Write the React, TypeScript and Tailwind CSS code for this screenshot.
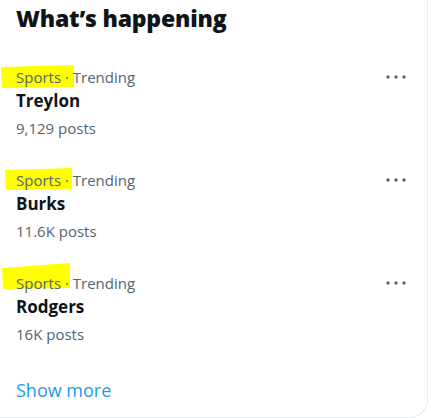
import React from "react";

const items = [
  { title: "Treylon", posts: "9,129 posts", hl: "M1,2 L74,0 L74,22 L2,23 Z" },
  { title: "Burks", posts: "11.6K posts", hl: "M5,2 L72,0 L72,21 L6,22 Z" },
  { title: "Rodgers", posts: "16K posts", hl: "M2,-3 L70,-8 L70,17 L3,18 Z" },
];

function Dots() {
  return (
    <svg width="22" height="22" viewBox="0 0 22 22" className="text-[#536471]">
      <circle cx="3" cy="11" r="1.7" fill="currentColor" />
      <circle cx="11" cy="11" r="1.7" fill="currentColor" />
      <circle cx="19" cy="11" r="1.7" fill="currentColor" />
    </svg>
  );
}

export default function App() {
  return (
    <div
      className="w-[431px] h-[418px] bg-white overflow-hidden"
      style={{ fontFamily: '"Open Sans", "Noto Sans", Arial, sans-serif' }}
    >
      <div className="w-[428px] h-[418px] border-r border-b border-[#e8ecee] rounded-br-[18px] flex flex-col">
        <div className="h-[65px] pl-4 pt-[2px]">
          <h2 className="text-[23px] leading-[32px] font-extrabold text-[#0f1419] tracking-[-0.2px]">
            What’s happening
          </h2>
        </div>
        {items.map((it) => (
          <div key={it.title} className="relative h-[103px]">
            <svg
              className="absolute left-0 top-0 overflow-visible"
              width="80"
              height="24"
              viewBox="0 0 80 24"
            >
              <path d={it.hl} fill="#ffff00" />
            </svg>
            <div className="relative flex items-start justify-between pl-4 pr-[20px]">
              <div className="flex flex-col">
                <div className="text-[15px] leading-[24px] text-[#536471]">
                  Sports · Trending
                </div>
                <div className="text-[17px] leading-[24px] font-bold text-[#0f1419]">
                  {it.title}
                </div>
                <div className="mt-[3px] text-[15px] leading-[24px] text-[#536471]">
                  {it.posts}
                </div>
              </div>
              <div className="pt-[1px]">
                <Dots />
              </div>
            </div>
          </div>
        ))}
        <div className="pl-4 pt-[4px]">
          <span className="text-[18px] leading-[24px] text-[#1d9bf0]">Show more</span>
        </div>
      </div>
    </div>
  );
}
